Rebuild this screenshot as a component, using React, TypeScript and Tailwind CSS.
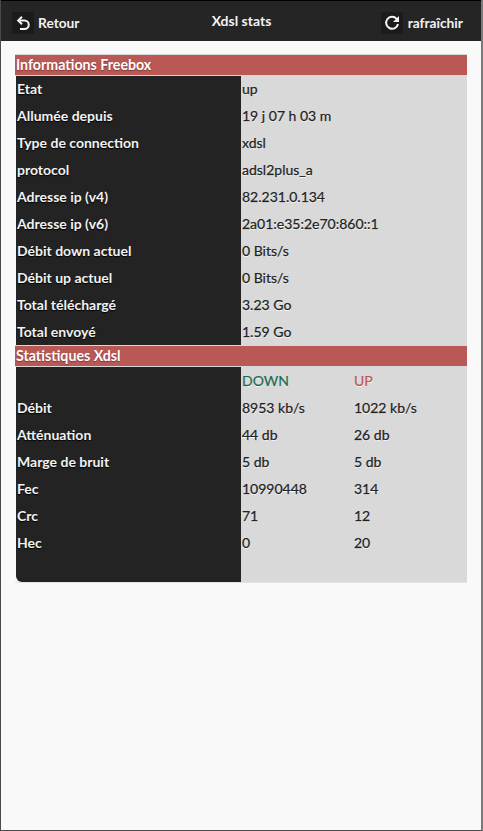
import { ReactNode } from 'react';

const infoRows = [
  ['Etat', 'up'],
  ['Allumée depuis', '19 j 07 h 03 m'],
  ['Type de connection', 'xdsl'],
  ['protocol', 'adsl2plus_a'],
  ['Adresse ip (v4)', '82.231.0.134'],
  ['Adresse ip (v6)', '2a01:e35:2e70:860::1'],
  ['Débit down actuel', '0 Bits/s'],
  ['Débit up actuel', '0 Bits/s'],
  ['Total téléchargé', '3.23 Go'],
  ['Total envoyé', '1.59 Go'],
];

const xdslRows = [
  ['Débit', '8953 kb/s', '1022 kb/s'],
  ['Atténuation', '44 db', '26 db'],
  ['Marge de bruit', '5 db', '5 db'],
  ['Fec', '10990448', '314'],
  ['Crc', '71', '12'],
  ['Hec', '0', '20'],
];

function SectionTitle({ children }: { children: ReactNode }) {
  return (
    <div className="relative h-[21px] border-b border-[#d8d8d8] bg-[#b95855] pl-px text-[14.2px] leading-[20px] font-bold text-white shadow-[0_-1px_0_#d8d8d8] [text-shadow:0_1px_1px_#7a3a38]">
      {children}
    </div>
  );
}

function Row({ label, tight, children }: { label: string; tight?: boolean; children: ReactNode }) {
  return (
    <div className={`grid h-[27px] grid-cols-[225px_226px] pl-px text-[14px] ${tight ? 'leading-[26px]' : 'leading-[28px]'}`}>
      <div className="bg-[#232323] pl-[1px] font-bold text-[#f2f2f2] [text-shadow:0_1px_1px_#000]">{label}</div>
      <div className="flex bg-[#d9d9d9] pl-px text-[#222] [-webkit-text-stroke:0.25px_#222] [text-shadow:0_1px_0_#fff]">
        {children}
      </div>
    </div>
  );
}

function IconButton({ children }: { children: ReactNode }) {
  return <span className="flex h-[22px] w-[22px] items-center justify-center bg-[#1b1b1b]">{children}</span>;
}

export default function App() {
  return (
    <div className="flex h-[831px] flex-col border-r-2 border-b border-l border-r-[#7a7a7a] border-b-[#4a4a4a] border-l-[#4a4a4a] bg-[#f9f9f9] font-['Lato','Liberation_Sans',sans-serif]">
      <header className="flex h-[41px] shrink-0 items-center justify-between border-t border-black bg-[#252525] pr-[18px] pl-[11px] text-[13.75px] font-bold text-[#f2f2f2]">
        <div className="flex items-center gap-[4px] pt-[4px]">
          <IconButton>
            <svg width="14" height="15" viewBox="0 0 14 15" fill="none" stroke="#f4f4f4" strokeWidth="2">
              <path d="M4 4.5h4.5a4 4 0 0 1 0 8.5H4" />
              <path d="M6 0.8 2.2 4.5 6 8.2" />
            </svg>
          </IconButton>
          <span>Retour</span>
        </div>
        <h1 className="absolute left-0 w-[483px] pb-[1px] text-center text-[14px]">Xdsl stats</h1>
        <div className="flex items-center gap-[5px] pt-[4px]">
          <IconButton>
            <svg width="16" height="16" viewBox="0 0 16 16" fill="none" stroke="#f4f4f4" strokeWidth="2">
              <path d="M12.6 3.8A6 6 0 1 0 14 9" />
              <path d="M15 1v6H9z" fill="#f4f4f4" stroke="none" />
            </svg>
          </IconButton>
          <span>rafraîchir</span>
        </div>
      </header>
      <main className="pt-[14px] pl-[14px]">
        <div className="w-[452px]">
          <SectionTitle>Informations Freebox</SectionTitle>
          {infoRows.map(([label, value]) => (
            <Row key={label} label={label} tight>
              {value}
            </Row>
          ))}
          <SectionTitle>Statistiques Xdsl</SectionTitle>
          <Row label="">
            <span className="w-[112px] text-[#1c6b4f] [-webkit-text-stroke:0.25px_#1c6b4f]">DOWN</span>
            <span className="text-[#b95855] [-webkit-text-stroke:0.25px_#b95855]">UP</span>
          </Row>
          {xdslRows.map(([label, down, up]) => (
            <Row key={label} label={label}>
              <span className="w-[112px]">{down}</span>
              <span>{up}</span>
            </Row>
          ))}
          <div className="grid h-[27px] grid-cols-[225px_226px] border-b border-[#e4e4e4] pl-px">
            <div className="rounded-bl-[6px] bg-[#232323]" />
            <div className="bg-[#d9d9d9]" />
          </div>
        </div>
      </main>
    </div>
  );
}
